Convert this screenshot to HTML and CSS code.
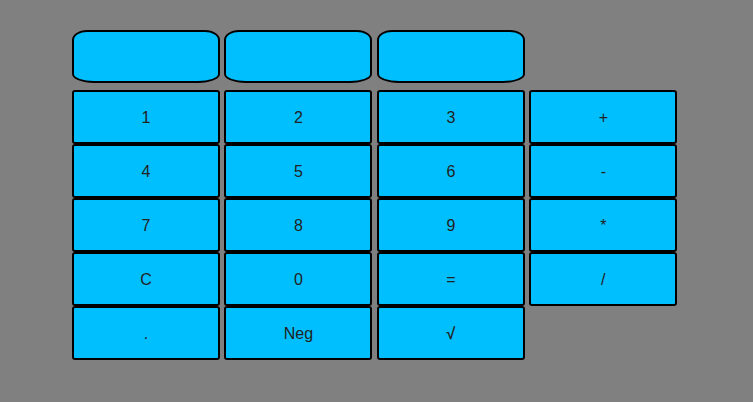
FILE: index.html
```html
<!DOCTYPE html>
<html lang="en">
<head>
  <meta charset="UTF-8">
  <meta name="viewport" content="width=device-width, initial-scale=1.0">
  <title>Calculator</title>
  <link rel="stylesheet" href="styles.css">
</head>
<body>
  <div class="calculator">
    <div class="displays">
      <div class="display"></div>
      <div class="display"></div>
      <div class="display"></div>
    </div>

    <div class="keypad">
      <button class="key">1</button>
      <button class="key">2</button>
      <button class="key">3</button>
      <button class="key">+</button>

      <button class="key">4</button>
      <button class="key">5</button>
      <button class="key">6</button>
      <button class="key">-</button>

      <button class="key">7</button>
      <button class="key">8</button>
      <button class="key">9</button>
      <button class="key">*</button>

      <button class="key">C</button>
      <button class="key">0</button>
      <button class="key">=</button>
      <button class="key">/</button>

      <button class="key">.</button>
      <button class="key">Neg</button>
      <button class="key sqrt">&#8730;</button>
    </div>
  </div>
</body>
</html>
```

FILE: styles.css
```css
body {
  margin: 0;
  background-color: #808080;
  font-family: "Liberation Sans", Arial, sans-serif;
}
.calculator {
  padding: 30px 0 0 72px;
}
.displays {
  display: grid;
  grid-template-columns: repeat(3, 148px);
  column-gap: 4.45px;
  margin-bottom: 7.5px;
}
.display {
  box-sizing: border-box;
  height: 52.5px;
  background-color: #00bfff;
  border: 2px solid #000;
  border-radius: 15px 15px 22px 22px / 10px 10px 9px 9px;
}
.keypad {
  display: grid;
  grid-template-columns: repeat(4, 148px);
  grid-auto-rows: 53.5px;
  column-gap: 4.45px;
  row-gap: 0.5px;
}
.key {
  box-sizing: border-box;
  margin: 0;
  padding: 2px 0 0;
  background-color: #00bfff;
  border: 2px solid #000;
  border-radius: 3px;
  color: #222;
  font-family: "Liberation Sans", Arial, sans-serif;
  font-size: 16px;
}
.sqrt {
  font-weight: bold;
}
```
